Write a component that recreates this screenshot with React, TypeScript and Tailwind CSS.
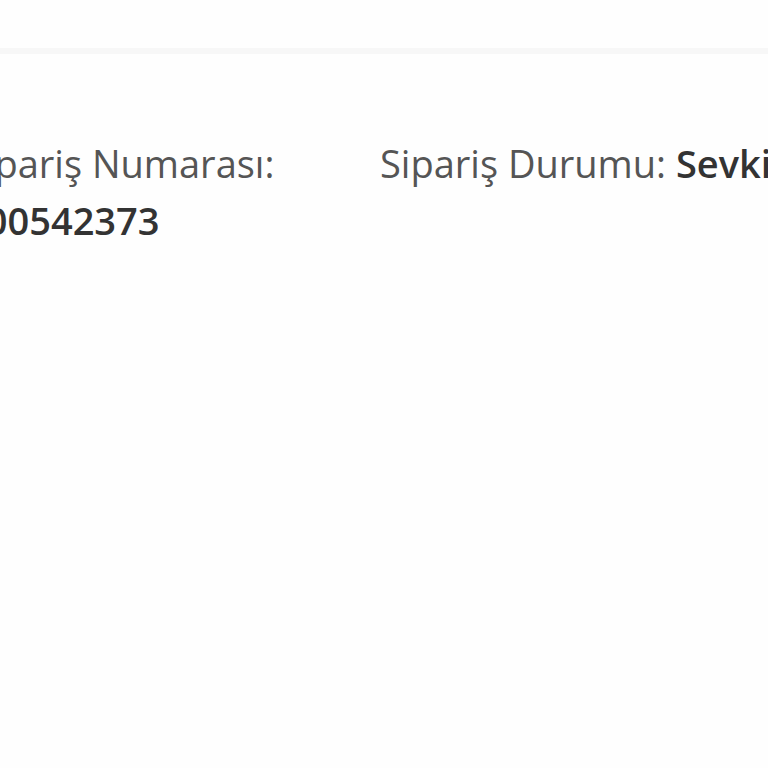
import React from 'react';

const App: React.FC = () => {
  return (
    <div className="w-[768px] h-[768px] bg-[#fefefe] overflow-hidden" style={{ fontFamily: '"Open Sans", sans-serif' }}>
      {/* top divider */}
      <div className="h-[48px]" />
      <div className="h-[6px] bg-[#f7f7f7]" />

      {/* order info */}
      <div className="ml-[-36px] mt-[81px] grid grid-cols-[416px_1fr] text-[38px] leading-[57px] text-[#555]">
        <div>
          <div className="whitespace-nowrap">Sipariş Numarası:</div>
          <div className="font-semibold text-[#333] whitespace-nowrap">900542373</div>
        </div>
        <div className="whitespace-nowrap">
          Sipariş Durumu: <span className="font-semibold text-[#333]">Sevkiyatta</span>
        </div>
      </div>
    </div>
  );
};

export default App;
